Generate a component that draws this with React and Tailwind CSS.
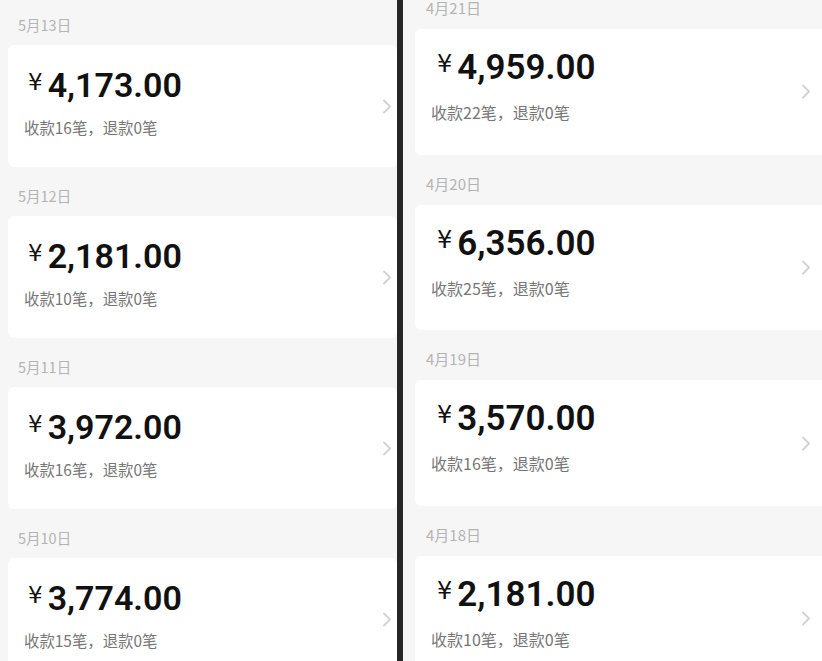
import React from "react";

const leftData = [
  ["5月13日", "4,173.00", 16],
  ["5月12日", "2,181.00", 10],
  ["5月11日", "3,972.00", 16],
  ["5月10日", "3,774.00", 15],
];
const rightData = [
  ["4月21日", "4,959.00", 22],
  ["4月20日", "6,356.00", 25],
  ["4月19日", "3,570.00", 16],
  ["4月18日", "2,181.00", 10],
];

const cjk = { fontFamily: '"Noto Sans CJK SC", "Noto Sans", sans-serif' };
const num = { fontFamily: 'Roboto, "Liberation Sans", sans-serif' };
const yen = { fontFamily: '"DejaVu Sans", "Liberation Sans", sans-serif' };

function Chevron() {
  return (
    <svg width="10" height="15" viewBox="0 0 10 15" fill="none">
      <polyline points="2,1.5 8,7.5 2,13.5" stroke="#d2d2d2" strokeWidth="1.8" strokeLinecap="round" strokeLinejoin="round" />
    </svg>
  );
}

function LeftSection({ d }) {
  return (
    <div>
      <div className="h-[49px] flex items-end pb-[12px] pl-[10px] text-[14.5px] leading-[16px] text-[#b4b4b4]" style={cjk}>
        {d[0]}
      </div>
      <div className="h-[122px] bg-white rounded-[6px] flex justify-between">
        <div className="pt-[20px] pl-[16px]">
          <div className="flex items-start ml-[4px]">
            <span className="text-[23px] leading-[22px] font-normal text-[#111] mt-[6px] mr-[5px]" style={yen}>¥</span>
            <span className="text-[34px] leading-[40px] font-semibold text-[#111]" style={num}>{d[1]}</span>
          </div>
          <div className="mt-[12px] text-[15.4px] leading-[20px] text-[#767676]" style={cjk}>
            收款{d[2]}笔，退款0笔
          </div>
        </div>
        <div className="self-center pr-[5px]">
          <Chevron />
        </div>
      </div>
    </div>
  );
}

function RightSection({ d }) {
  return (
    <div>
      <div className="h-[50px] flex items-end pb-[13px] pl-[11px] text-[15px] leading-[16px] text-[#b4b4b4]" style={cjk}>
        {d[0]}
      </div>
      <div className="h-[125.67px] bg-white rounded-l-[6px] flex justify-between">
        <div className="pt-[18px] pl-[16px]">
          <div className="flex items-start ml-[6px]">
            <span className="text-[24px] leading-[23px] font-normal text-[#111] mt-[6px] mr-[5px]" style={yen}>¥</span>
            <span className="text-[35px] leading-[41px] font-semibold text-[#111]" style={num}>{d[1]}</span>
          </div>
          <div className="mt-[14px] text-[16px] leading-[20px] text-[#767676]" style={cjk}>
            收款{d[2]}笔，退款0笔
          </div>
        </div>
        <div className="self-center pr-[11px]">
          <Chevron />
        </div>
      </div>
    </div>
  );
}

export default function App() {
  return (
    <div className="flex w-[822px] h-[661px] overflow-hidden bg-[#f6f6f6]">
      <div className="w-[397px] h-full overflow-hidden bg-[#f6f6f6] pl-[8px]">
        <div className="mt-[-4px]">
          {leftData.map((d) => (
            <LeftSection key={d[0]} d={d} />
          ))}
        </div>
      </div>
      <div className="w-[6px] h-full bg-[#262626]" />
      <div className="flex-1 h-full overflow-hidden bg-[#f6f6f6] pl-[12px]">
        <div className="mt-[-21px]">
          {rightData.map((d) => (
            <RightSection key={d[0]} d={d} />
          ))}
        </div>
      </div>
    </div>
  );
}
